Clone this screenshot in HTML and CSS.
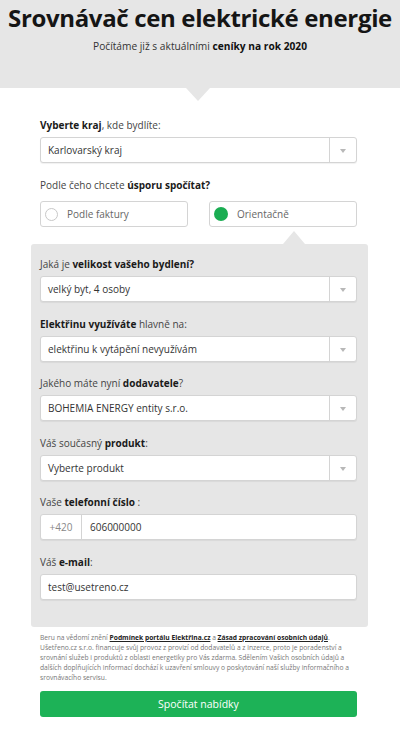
FILE: index.html
```html
<!DOCTYPE html>
<html lang="cs">
<head>
  <meta charset="UTF-8">
  <meta name="viewport" content="width=device-width, initial-scale=1.0">
  <title>Srovnávač cen elektrické energie</title>
  <link rel="stylesheet" href="styles.css">
</head>
<body>
  <header class="hero">
    <h1>Srovnávač cen elektrické energie</h1>
    <p>Počítáme již s aktuálními <b>ceníky na rok 2020</b></p>
  </header>

  <main class="calc">
    <div class="field">
      <label><b>Vyberte kraj</b>, kde bydlíte:</label>
      <div class="select">
        <span>Karlovarský kraj</span>
        <span class="arrow"></span>
      </div>
    </div>

    <div class="field">
      <label>Podle čeho chcete <b>úsporu spočítat?</b></label>
      <div class="choice">
        <div class="option"><span class="dot"></span>Podle faktury</div>
        <div class="option active"><span class="dot"></span>Orientačně</div>
      </div>
    </div>

    <section class="panel">
      <div class="field">
        <label>Jaká je <b>velikost vašeho bydlení?</b></label>
        <div class="select">
          <span>velký byt, 4 osoby</span>
          <span class="arrow"></span>
        </div>
      </div>

      <div class="field">
        <label><b>Elektřinu využíváte</b> hlavně na:</label>
        <div class="select">
          <span>elektřinu k vytápění nevyužívám</span>
          <span class="arrow"></span>
        </div>
      </div>

      <div class="field">
        <label>Jakého máte nyní <b>dodavatele</b>?</label>
        <div class="select">
          <span>BOHEMIA ENERGY entity s.r.o.</span>
          <span class="arrow"></span>
        </div>
      </div>

      <div class="field">
        <label>Váš současný <b>produkt</b>:</label>
        <div class="select">
          <span>Vyberte produkt</span>
          <span class="arrow"></span>
        </div>
      </div>

      <div class="field">
        <label>Vaše <b>telefonní číslo</b> :</label>
        <div class="input phone">
          <span class="prefix">+420</span>
          <span>606000000</span>
        </div>
      </div>

      <div class="field">
        <label>Váš <b>e-mail</b>:</label>
        <div class="input">
          <span>test@usetreno.cz</span>
        </div>
      </div>
    </section>

    <p class="legal">
      Beru na vědomí znění <a href="#">Podmínek portálu Elektřina.cz</a> a <a href="#">Zásad zpracování osobních údajů</a>.<br>
      Ušetřeno.cz s.r.o. financuje svůj provoz z provizí od dodavatelů a z inzerce, proto je poradenství a<br>
      srovnání služeb i produktů z oblasti energetiky pro Vás zdarma. Sdělením Vašich osobních údajů a<br>
      dalších doplňujících informací dochází k uzavření smlouvy o poskytování naší služby informačního a<br>
      srovnávacího servisu.
    </p>

    <button type="submit" class="submit">Spočítat nabídky</button>
  </main>
</body>
</html>
```

FILE: styles.css
```css
body {
  margin: 0;
  font-family: "Open Sans", Arial, sans-serif;
  background-color: #fff;
  color: #444;
}

.hero {
  background-color: #e6e6e6;
  height: 88px;
  text-align: center;
  position: relative;
}

.hero::after {
  content: "";
  position: absolute;
  left: 186px;
  bottom: -13px;
  border-left: 12px solid transparent;
  border-right: 12px solid transparent;
  border-top: 13px solid #e6e6e6;
}

.hero h1 {
  margin: 0;
  padding-top: 2px;
  font-size: 24px;
  line-height: 32px;
  font-weight: 700;
  color: #151515;
  letter-spacing: -0.35px;
  white-space: nowrap;
}

.hero p {
  margin: 4px 0 0;
  font-size: 10.2px;
  line-height: 16px;
  color: #333;
}

.hero b {
  color: #111;
}

.calc {
  width: 317px;
  margin-left: 40px;
  padding-top: 29px;
}

.field {
  margin-bottom: 14px;
}

label {
  display: block;
  font-size: 10px;
  line-height: 16px;
  margin-bottom: 4px;
  color: #444;
}

label b {
  color: #1a1a1a;
}

.select,
.input {
  display: flex;
  align-items: center;
  height: 26px;
  box-sizing: border-box;
  background-color: #fff;
  border: 1px solid #d4d4d4;
  border-radius: 3px;
  box-shadow: 0 1px 1px rgba(0,0,0,0.06);
  font-size: 10px;
  color: #333;
  padding-left: 7px;
}

.select span:first-child {
  flex: 1;
}

.arrow {
  align-self: stretch;
  width: 26px;
  border-left: 1px solid #d4d4d4;
  position: relative;
}

.arrow::after {
  content: "";
  position: absolute;
  left: 10px;
  top: 11px;
  border-left: 3.5px solid transparent;
  border-right: 3.5px solid transparent;
  border-top: 4px solid #b8b8b8;
}

.choice {
  display: flex;
  gap: 21px;
  margin-top: 8px;
}

.option {
  flex: 1;
  display: flex;
  align-items: center;
  height: 26px;
  box-sizing: border-box;
  border: 1px solid #d4d4d4;
  border-radius: 3px;
  padding-left: 4px;
  font-size: 10px;
  color: #666;
  position: relative;
}

.dot {
  width: 13px;
  height: 13px;
  box-sizing: border-box;
  border: 1px solid #c8c8c8;
  border-radius: 50%;
  margin-right: 9px;
}

.option.active .dot {
  width: 14px;
  height: 14px;
  border: none;
  background-color: #1aad52;
}

.option.active::after {
  content: "";
  position: absolute;
  left: 73px;
  bottom: -18px;
  border-left: 11px solid transparent;
  border-right: 11px solid transparent;
  border-bottom: 13px solid #e6e6e6;
}

.panel {
  background-color: #e6e6e6;
  margin: 17px -11px 0 -9px;
  padding: 12px 11px 14px 9px;
  border-radius: 3px;
}

.panel .field {
  margin-bottom: 13.5px;
}

.panel .field:last-child {
  margin-bottom: 0;
  padding-bottom: 13px;
}

.phone {
  padding-left: 0;
}

.prefix {
  width: 40px;
  align-self: stretch;
  display: flex;
  align-items: center;
  justify-content: center;
  border-right: 1px solid #d4d4d4;
  color: #888;
  margin-right: 8px;
}

.legal {
  margin: 6px 0 0;
  font-size: 6.7px;
  line-height: 10px;
  color: #777;
  white-space: nowrap;
}

.legal a {
  color: #222;
  font-weight: bold;
}

.submit {
  display: block;
  width: 100%;
  height: 26px;
  margin-top: 8px;
  border: none;
  border-radius: 3px;
  background-color: #1db257;
  color: #fff;
  font-family: "Open Sans", Arial, sans-serif;
  font-size: 10.5px;
  cursor: pointer;
}
```
